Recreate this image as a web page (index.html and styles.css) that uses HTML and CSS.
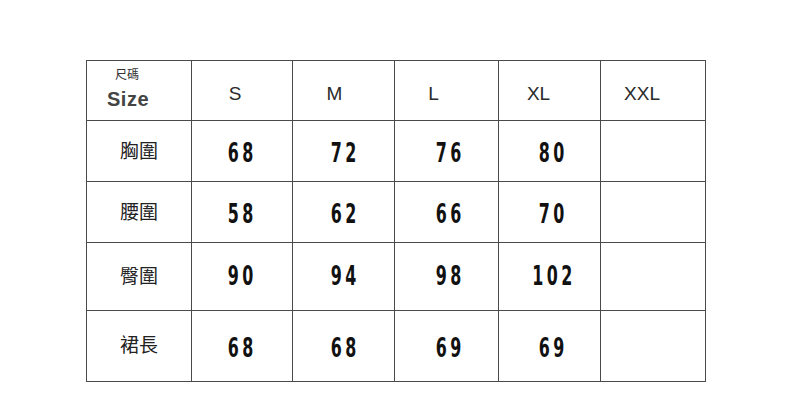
FILE: index.html
```html
<!DOCTYPE html>
<html lang="zh-Hant">
<head>
<meta charset="utf-8">
<link rel="stylesheet" href="styles.css">
</head>
<body>
<div class="page">
  <div class="chart">
    <div class="cell head corner"><span class="zh-small">尺碼</span><span class="size">Size</span></div>
    <div class="cell head"><span class="h s">S</span></div>
    <div class="cell head"><span class="h m">M</span></div>
    <div class="cell head"><span class="h l">L</span></div>
    <div class="cell head"><span class="h xl">XL</span></div>
    <div class="cell head"><span class="h xxl">XXL</span></div>

    <div class="cell label r1">胸圍</div>
    <div class="cell num r1"><span class="n c1">68</span></div>
    <div class="cell num r1"><span class="n c2">72</span></div>
    <div class="cell num r1"><span class="n c3">76</span></div>
    <div class="cell num r1"><span class="n c4">80</span></div>
    <div class="cell num r1"></div>

    <div class="cell label r2">腰圍</div>
    <div class="cell num r2"><span class="n c1">58</span></div>
    <div class="cell num r2"><span class="n c2">62</span></div>
    <div class="cell num r2"><span class="n c3">66</span></div>
    <div class="cell num r2"><span class="n c4">70</span></div>
    <div class="cell num r2"></div>

    <div class="cell label r3">臀圍</div>
    <div class="cell num r3"><span class="n c1">90</span></div>
    <div class="cell num r3"><span class="n c2">94</span></div>
    <div class="cell num r3"><span class="n c3">98</span></div>
    <div class="cell num r3"><span class="n c4">102</span></div>
    <div class="cell num r3"></div>

    <div class="cell label r4">裙長</div>
    <div class="cell num r4"><span class="n c1">68</span></div>
    <div class="cell num r4"><span class="n c2">68</span></div>
    <div class="cell num r4"><span class="n c3">69</span></div>
    <div class="cell num r4"><span class="n c4">69</span></div>
    <div class="cell num r4"></div>
  </div>
</div>
</body>
</html>
```
FILE: styles.css
```css
html, body {
  margin: 0;
  padding: 0;
  background: #ffffff;
}
.page {
  width: 790px;
  height: 408px;
  padding: 60px 0 0 86px;
  box-sizing: border-box;
}
.chart {
  display: grid;
  grid-template-columns: 105px 101px 102px 104px 102px 105px;
  grid-template-rows: 60px 61px 61px 68px 71px;
  border-left: 1px solid #4a4a4a;
  border-top: 1px solid #4a4a4a;
  width: max-content;
}
.cell {
  border-right: 1px solid #4a4a4a;
  border-bottom: 1px solid #4a4a4a;
  display: flex;
  align-items: center;
  justify-content: center;
  box-sizing: border-box;
  color: #1a1a1a;
}
.corner {
  flex-direction: column;
  align-items: flex-start;
  justify-content: flex-start;
  padding: 5px 0 0 20px;
}
.zh-small {
  font-family: "Noto Sans CJK TC", sans-serif;
  font-size: 12px;
  line-height: 16px;
  color: #333;
  margin-left: 8px;
}
.size {
  font-family: "Liberation Sans", Arial, sans-serif;
  font-size: 20px;
  font-weight: bold;
  line-height: 24px;
  color: #444;
  margin-top: 5px;
  letter-spacing: 0.5px;
}
.h {
  font-family: "Liberation Sans", Arial, sans-serif;
  font-size: 19px;
  color: #2a2a2a;
  position: relative;
  top: 3px;
}
.s { left: -7px; }
.m { left: -9px; }
.l { left: -13px; }
.xl { left: -11px; }
.xxl { left: -11px; }
.label {
  font-family: "Noto Sans CJK TC", sans-serif;
  font-size: 19px;
  color: #222;
}
.label.r1, .label.r2 { padding-bottom: 3px; }
.label.r3 { padding-bottom: 4px; }
.label.r4 { padding-bottom: 5px; }
.n {
  display: inline-block;
  font-family: "DejaVu Sans Condensed", "DejaVu Sans", sans-serif;
  font-weight: bold;
  font-size: 26px;
  letter-spacing: 5px;
  color: #111;
  position: relative;
  transform: scaleX(0.68);
}
.num.r1 .n { top: 2px; }
.num.r2 .n { top: 2px; }
.num.r3 .n { top: -1px; }
.num.r4 .n { top: 2px; }
.c1 { left: 0px; }
.c2 { left: 2px; }
.c3 { left: 4px; }
.c4 { left: 4px; }
```
